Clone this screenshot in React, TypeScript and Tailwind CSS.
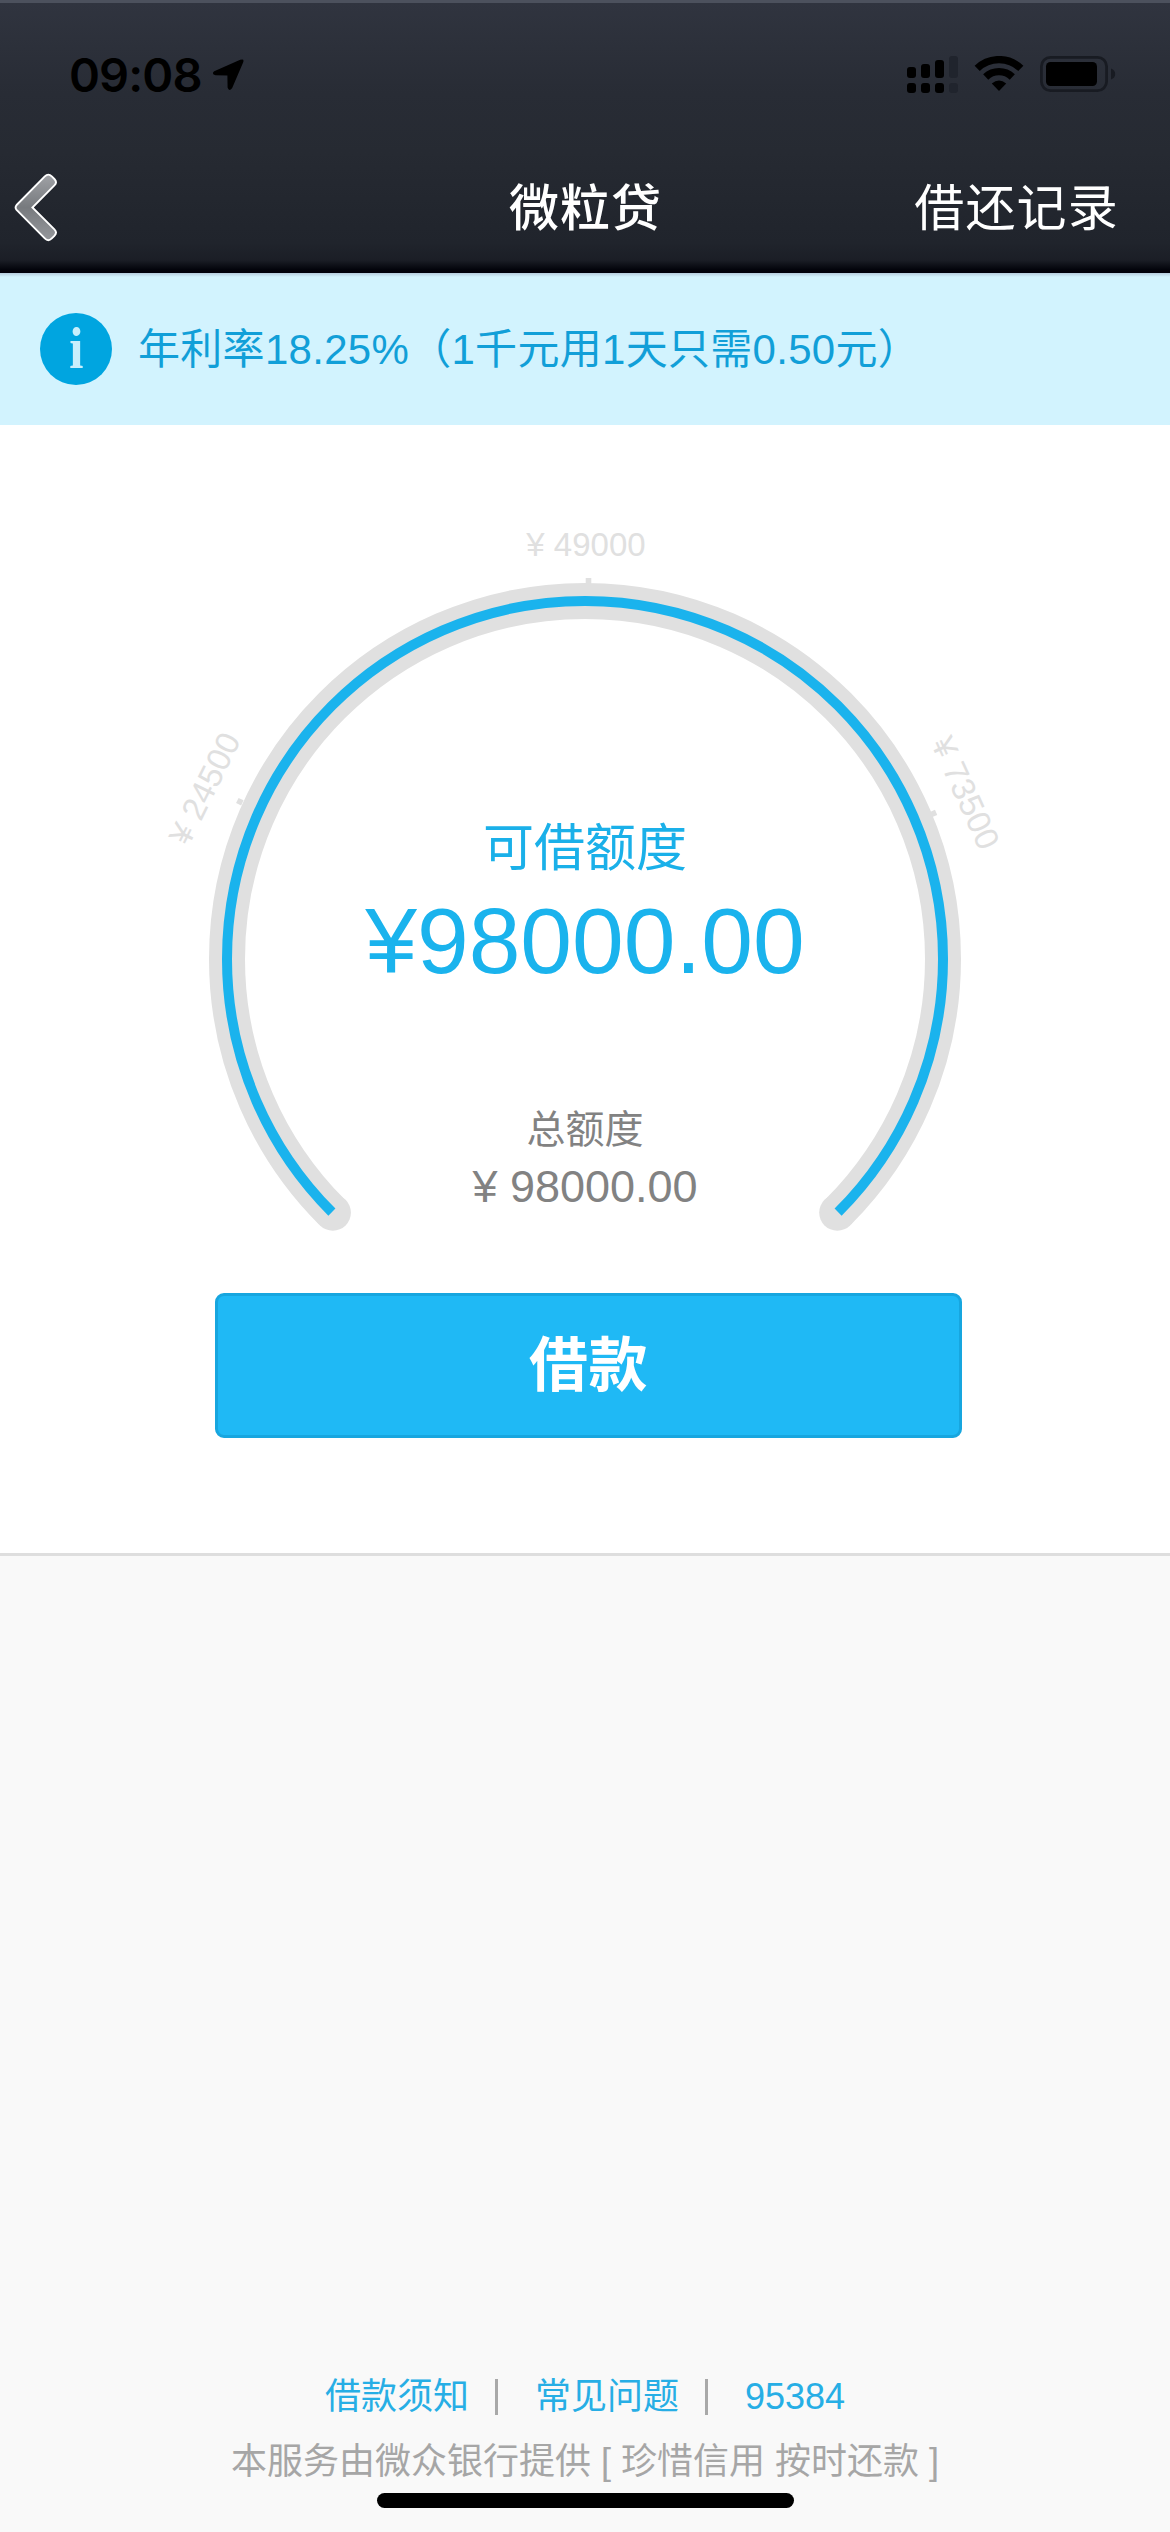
const quickLinks = ['借款须知', '常见问题', '95384'];

const StatusBar = () => (
  <div className="flex h-[140px] items-start justify-between pl-[69px] pr-[54px] pt-[50px]">
    <div className="flex items-center">
      <span className="w-[134px] whitespace-nowrap font-['Inter'] text-[47px] font-semibold leading-[49px] tracking-[-0.9px] text-black">
        09:08
      </span>
      <svg className="ml-[9px] h-[34px] w-[34px]" viewBox="0 0 34 34">
        <path
          d="M2.2 13.2 L28.2 1.8 Q32.8 0.2 31 4.8 L20.2 30 Q17 34 15.6 29.6 L15.4 17.4 L3.6 17.2 Q-1 16 2.2 13.2 Z"
          fill="#000"
        />
      </svg>
    </div>
    <div className="flex h-[49px] items-center">
      <svg className="h-[37px] w-[209px]" viewBox="907 56 209 37">
        {/* Dual SIM signal */}
        <g fill="#000">
          <rect x="907" y="67" width="9" height="11" rx="3" />
          <rect x="921" y="64" width="9" height="14" rx="3" />
          <rect x="935" y="60" width="9" height="18" rx="3" />
          <rect x="907" y="83" width="9" height="10" rx="3" />
          <rect x="921" y="83" width="9" height="10" rx="3" />
          <rect x="935" y="83" width="9" height="10" rx="3" />
        </g>
        <g fill="#20242d">
          <rect x="949" y="56" width="9" height="22" rx="3" />
          <rect x="949" y="83" width="9" height="10" rx="3" />
        </g>
        {/* Wifi */}
        <g fill="none" stroke="#000" strokeWidth="7.4">
          <path d="M977.2 68.4 A31.5 31.5 0 0 1 1020.8 68.4" />
          <path d="M985.7 77 A19.2 19.2 0 0 1 1012.3 77" />
        </g>
        <path d="M991.8 83.6 Q999 77.2 1006.2 83.6 L999 91 Z" fill="#000" />
        {/* Battery */}
        <rect x="1041.4" y="57.4" width="65.2" height="33.2" rx="9" fill="none" stroke="#181b22" strokeWidth="2.8" />
        <rect x="1046" y="62" width="51" height="24" rx="4.5" fill="#000" />
        <path d="M1111 68.5 Q1115.2 70 1115.2 74 Q1115.2 78 1111 79.5 Z" fill="#181b22" />
      </svg>
    </div>
  </div>
);

const NavBar = () => (
  <div className="grid h-[133px] grid-cols-3 items-center pl-[14px] pr-[51px] text-white">
    <svg className="h-[72px] w-[46px]" viewBox="14 170 46 72">
      <defs>
        <linearGradient id="chevron" x1="0" y1="0" x2="0" y2="1">
          <stop offset="0" stopColor="#a0a2a6" />
          <stop offset="0.5" stopColor="#777a7e" />
          <stop offset="1" stopColor="#95979b" />
        </linearGradient>
      </defs>
      <path
        d="M16.6 204 L44.8 175.4 Q48.3 171.8 51.8 175.4 L54.4 178 Q57.6 181.2 54.4 184.4 L32.4 206.5 L54.4 228.4 Q57.6 231.6 54.4 234.8 L51.8 237.4 Q48.3 241 44.8 237.4 L16.6 208.8 Q14.6 206.4 16.6 204 Z"
        fill="url(#chevron)"
        stroke="#fff"
        strokeWidth="1.9"
      />
    </svg>
    <h1 className="justify-self-center whitespace-nowrap pl-[38px] pt-1 text-[50px] font-medium leading-[60px] tracking-[1px]">
      微粒贷
    </h1>
    <span className="justify-self-end whitespace-nowrap pt-[5px] text-[50px] leading-[60px] tracking-[1.2px]">借还记录</span>
  </div>
);

const Notice = () => (
  <div className="flex h-[152px] items-center bg-[linear-gradient(#b5cbdc_0px,#d2f3fe_4px)] pl-10">
    <div className="flex h-[72px] w-[72px] justify-center rounded-full bg-[#00a5e0] font-['Liberation_Serif'] text-[60px] font-bold leading-[71px] text-[#c8effc]">
      <span className="scale-x-[0.85]">i</span>
    </div>
    <p className="ml-[26px] pt-[2px] text-[42px] leading-[56px] tracking-[0.3px] text-[#119fd8]">
      年利率18.25%（1千元用1天只需0.50元）
    </p>
  </div>
);

const Gauge = () => (
  <div className="relative flex h-[868px] flex-col items-center pt-[394px]">
    <svg className="absolute inset-0 h-full w-full" viewBox="0 425 1170 868">
      {/* Track */}
      <path d="M331.9 1212.1 A358 358 0 1 1 838.1 1212.1" fill="none" stroke="#e0e0e0" strokeWidth="36" />
      <circle cx="332.8" cy="1212.6" r="18.1" fill="#e0e0e0" />
      <circle cx="837.3" cy="1212.6" r="18.1" fill="#e0e0e0" />
      {/* Available amount */}
      <path d="M331.9 1212.1 A358 358 0 1 1 838.1 1212.1" fill="none" stroke="#1ab3ed" strokeWidth="10" />
      {/* Scale */}
      <g fill="#e0e0e0">
        <rect x="585.7" y="578" width="5.6" height="6" />
        <rect x="237" y="799" width="5.6" height="5.6" transform="rotate(-64 239.7 801.7)" />
        <rect x="931" y="810.5" width="5.6" height="6" transform="rotate(66 933.5 813.2)" />
      </g>
      <g fill="#e0e0e0" fontSize="33" textAnchor="middle">
        <text x="586" y="555.7">¥ 49000</text>
        <text transform="translate(204.3 788.2) rotate(-63.8)" y="11.8">¥ 24500</text>
        <text transform="translate(966 792.8) rotate(65.6)" y="11.8">¥ 73500</text>
      </g>
    </svg>
    <div className="text-[51px] leading-[60px] text-[#1ab0e9]">可借额度</div>
    <div className="mt-[2px] text-[93px] leading-[120px] text-[#1ab3ed]">¥98000.00</div>
    <div className="mt-[105px] text-[39px] leading-[48px] text-[#828282]">总额度</div>
    <div className="mt-[6px] text-[45px] leading-[54px] text-[#828282]">¥ 98000.00</div>
  </div>
);

const Footer = () => (
  <footer className="mt-auto flex flex-col items-center pb-[24px] text-[36px] leading-[50px]">
    <div className="flex items-center text-[#27aee5]">
      {quickLinks.map((link, i) => (
        <div key={link} className="flex items-center">
          {i > 0 && <span className="ml-[26px] mr-[37px] h-[36px] w-[3px] bg-[#a9a9a9]" />}
          <a>{link}</a>
        </div>
      ))}
    </div>
    <p className="mt-[15px] whitespace-nowrap text-[#a6a6a6]">本服务由微众银行提供 [ 珍惜信用 按时还款 ]</p>
    <div className="mt-[6px] h-[15px] w-[417px] rounded-full bg-black" />
  </footer>
);

const App = () => {
  return (
    <div className="flex h-[2532px] w-[1170px] flex-col overflow-hidden bg-[#f9f9f9] font-['Liberation_Sans','Noto_Sans_CJK_SC',sans-serif]">
      <header className="h-[273px] border-t-[3px] border-[#4c515d] bg-[linear-gradient(#30343f_0px,#282c35_90px,#262a32_150px,#20242c_240px,#1b1e26_257px,#02030a_267px,#00000a_270px)]">
        <div className="-mt-[3px]">
          <StatusBar />
          <NavBar />
        </div>
      </header>
      <Notice />
      <main className="h-[1131px] border-b-[3px] border-[#dedede] bg-white">
        <Gauge />
        <button className="ml-[215px] block h-[145px] w-[747px] rounded-[9px] border-[3px] border-[#17a6df] bg-[#1fb9f5] text-[59px] font-bold leading-[139px] tracking-[0.5px] text-white">
          <span className="inline-block pt-px">借款</span>
        </button>
      </main>
      <Footer />
    </div>
  );
};

export default App;
